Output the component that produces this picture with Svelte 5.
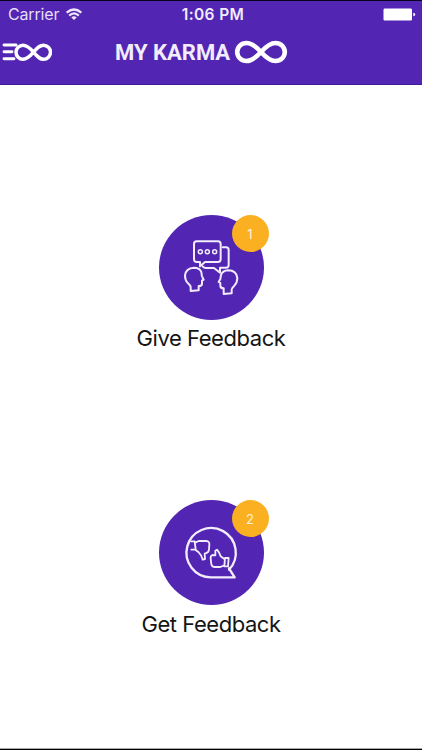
<script>
  const actions = [
    { id: 'give', label: 'Give Feedback', count: 1 },
    { id: 'get', label: 'Get Feedback', count: 2 }
  ];
</script>

<div class="screen">
  <header>
    <div class="status">
      <div class="carrier">
        <span>Carrier</span>
        <svg class="wifi" width="16" height="13" viewBox="0 0 16 13" fill="none" stroke="#eee8fa" stroke-width="2.2">
          <path d="M.7 4.7Q8-1.7 15.3 4.7M3.2 7.6Q8 3.2 12.8 7.6" />
          <path d="M8 12 5.3 9.4Q8 7.2 10.7 9.4Z" fill="#eee8fa" stroke="none" />
        </svg>
      </div>
      <span class="time">1:06 PM</span>
      <svg class="battery" width="33" height="13" viewBox="0 0 33 13" fill="#fff">
        <rect x=".5" y=".5" width="28.5" height="12" rx="1.2" />
        <path d="M30.3 4.8Q32.2 5 32.2 6.5T30.3 8.2Z" />
      </svg>
    </div>
    <div class="nav">
      <svg class="menu" width="52" height="22" viewBox="0 0 52 22" fill="none" stroke="#fff" stroke-linecap="round">
        <path d="M4 4H16M4 10.8H12M4 17.8H14" stroke-width="2.9" />
        <path d="M33.5 11.2C28.5 5.2 26 4.2 23 4.2a7 7 0 0 0 0 14C26 18.2 28.5 17.2 33.5 11.2S40.5 4.2 43.5 4.2a7 7 0 0 1 0 14C40.5 18.2 38.5 17.2 33.5 11.2Z" stroke-width="3.5" />
      </svg>
      <h1>MY KARMA</h1>
      <svg class="logo" width="54" height="24" viewBox="0 0 54 24" fill="none" stroke="#fff" stroke-width="4.6">
        <path d="M27 12C20 4.3 16 3 12.5 3a9.3 9 0 0 0 0 18C16 21 20 19.7 27 12S38 3 41.5 3a9.3 9 0 0 1 0 18C38 21 34 19.7 27 12Z" />
      </svg>
    </div>
  </header>

  <main>
    {#each actions as action (action.id)}
      <section>
        <div class="disc">
          <svg width="105" height="105" viewBox="27 30 315 315" fill="none" stroke="#f2ecfd" stroke-width="6" stroke-linejoin="round" stroke-linecap="round">
            {#if action.id === 'give'}
              <path d="M140 109H204Q212 109 212 117V163Q212 171 204 171H165L150 184V171H140Q132 171 132 163V117Q132 109 140 109Z" />
              <path d="M218 127H228Q236 127 236 135V180Q236 188 228 188H210V203L192 189H168Q162 189 158 184" />
              <g stroke-width="4.5">
                <circle cx="151" cy="140" r="6" /><circle cx="172" cy="140" r="6" /><circle cx="194" cy="140" r="6" />
              </g>
              <path d="M122 258V246Q121 241 114 235Q105 226 105 212Q107 189 132 188Q149 188 154 201Q155 210 156 214L161 224L156 227V236Q156 243 146 243V256Z" />
              <path d="M245 265V253Q246 248 253 242Q262 233 262 219Q259 196 235 196Q217 197 213 210L211 222L206 231L211 234V243Q212 250 221 250V267Z" />
            {:else}
              <path d="M237 239A74 74 0 1 0 183 262H254L237 235" stroke-width="7" />
              <g stroke-width="5.5">
                <path d="M123 154H134L137 179H124M137 157L146 153H169Q179 154 178 163L177 178Q176 187 169 189L164 191L165 207L158 209Q155 195 146 187L137 180" />
                <path d="M225 204H236L234 229H223ZM223 207L212 199Q209 188 201 179L196 182L196 196L187 195Q181 197 182 206L184 222Q185 230 193 231H211L223 226" />
              </g>
            {/if}
          </svg>
          <span class="badge">{action.count}</span>
        </div>
        <p class={action.id}>{action.label}</p>
      </section>
    {/each}
  </main>
</div>

<style>
  .screen {
    box-sizing: border-box;
    width: 422px;
    height: 750px;
    overflow: hidden;
    display: flex;
    flex-direction: column;
    background: #fff;
    border-top: 1px solid #08031a;
    border-bottom: 1px solid #000;
    box-shadow: inset 0 -1px #aaa;
    font-family: Inter, "Liberation Sans", sans-serif;
  }
  header {
    box-sizing: border-box;
    height: 84px;
    flex: none;
    background: #5225b3;
    border-bottom: 1px solid #3f1a98;
  }
  .status {
    display: grid;
    grid-template-columns: 1fr auto 1fr;
    align-items: center;
    height: 27px;
    padding: 0 6px 0 8px;
    color: #e6def7;
    font-size: 16px;
    line-height: 27px;
  }
  .carrier { display: flex; align-items: center; gap: 7px; letter-spacing: -.15px; }
  .time { font-size: 15.5px; font-weight: 600; letter-spacing: .35px; padding-left: 2px; color: #f1ecfb; }
  .battery { justify-self: end; }
  .nav { display: flex; align-items: center; height: 48px; }
  h1 {
    margin: 2px 0 0 63px;
    width: 118px;
    font: 700 22px/26px Roboto, sans-serif;
    letter-spacing: 0;
    white-space: nowrap;
    color: #f2edfc;
  }
  .logo { margin-left: 1px; }
  main { display: flex; flex-direction: column; gap: 145px; padding-top: 130px; }
  section { display: flex; flex-direction: column; align-items: center; height: 140px; }
  .disc {
    position: relative;
    width: 105px;
    height: 105px;
    border-radius: 50%;
    background: #5225b3;
  }
  .disc svg { display: block; }
  .badge {
    position: absolute;
    top: 0;
    right: -5px;
    width: 37px;
    height: 37px;
    border-radius: 50%;
    background: #fbb021;
    color: #fff4dc;
    font-size: 13px;
    line-height: 38px;
    text-align: center;
  }
  p {
    margin: 4px 0 0;
    font-size: 22px;
    line-height: 28px;
    letter-spacing: -.45px;
    white-space: nowrap;
    color: #151515;
  }
  .get { margin-top: 5px; }
</style>
